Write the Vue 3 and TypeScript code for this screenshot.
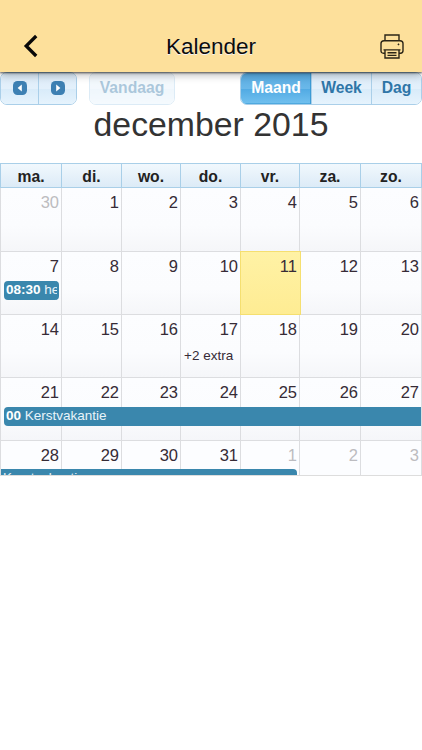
<script setup lang="ts">
interface Day {
  n: number
  other?: boolean
  today?: boolean
  extra?: string
}
interface CalendarEvent {
  time?: string
  title: string
  kind: string
}
interface Week {
  days: Day[]
  event?: CalendarEvent
}

const dayNames: string[] = ['ma.', 'di.', 'wo.', 'do.', 'vr.', 'za.', 'zo.']

const range = (from: number): Day[] => Array.from({ length: 7 }, (_, i) => ({ n: from + i }))

const weeks: Week[] = [
  { days: [{ n: 30, other: true }, ...range(1).slice(0, 6)] },
  {
    days: range(7).map((d) => ({ ...d, today: d.n === 11 })),
    event: { time: '08:30', title: 'he', kind: 'single' },
  },
  { days: range(14).map((d) => (d.n === 17 ? { ...d, extra: '+2 extra' } : d)) },
  { days: range(21), event: { time: '00', title: 'Kerstvakantie', kind: 'start' } },
  {
    days: [...range(28).slice(0, 4), { n: 1, other: true }, { n: 2, other: true }, { n: 3, other: true }],
    event: { title: 'Kerstvakantie', kind: 'end' },
  },
]
</script>

<template>
  <div class="screen">
    <header class="topbar">
      <svg class="back" width="16" height="24" viewBox="0 0 16 24">
        <path d="M13.2 2 3.2 12l10 10" fill="none" stroke="#080808" stroke-width="3.3" />
      </svg>
      <h1>Kalender</h1>
      <svg class="print" width="24" height="25" viewBox="0 0 24 26" preserveAspectRatio="none" fill="none" stroke="#2b2517" stroke-width="1.4">
        <path d="M5 7V1h14v6M5 20H3.500Q1 20 1 17.500V10Q1 7 4 7h16q3 0 3 3v7.500Q23 20 20.500 20H19" />
        <path d="M3.500 16.500h17M5 16.500V25h14v-8.500M7.500 19.500h9M7.500 22.300h9" />
        <circle cx="18.500" cy="10.800" r=".6" fill="#2b2517" stroke-width=".7" />
      </svg>
    </header>

    <div class="toolbar">
      <div class="group nav">
        <button class="btn" aria-label="Vorige">
          <svg width="14" height="14" viewBox="0 0 14 14">
            <rect width="14" height="14" rx="4.500" fill="#3d80b3" />
            <path d="M8.800 3.500v7L4.600 7z" fill="#fff" />
          </svg>
        </button>
        <button class="btn" aria-label="Volgende">
          <svg width="14" height="14" viewBox="0 0 14 14">
            <rect width="14" height="14" rx="4.500" fill="#3d80b3" />
            <path d="M5.200 3.500v7L9.400 7z" fill="#fff" />
          </svg>
        </button>
      </div>
      <div class="group now"><button class="btn">Vandaag</button></div>
      <div class="group views">
        <button class="btn active">Maand</button>
        <button class="btn week-btn">Week</button>
        <button class="btn day-btn">Dag</button>
      </div>
    </div>

    <h2>december 2015</h2>

    <div class="calendar">
      <div class="row names">
        <div v-for="name in dayNames" :key="name" class="name">{{ name }}</div>
      </div>
      <div v-for="(week, w) in weeks" :key="w" class="row week">
        <div
          v-for="(day, d) in week.days"
          :key="d"
          class="cell"
          :class="{ other: day.other, today: day.today }"
        >
          <span class="num">{{ day.n }}</span>
          <span v-if="day.extra" class="extra">{{ day.extra }}</span>
        </div>
        <div v-if="week.event" class="event" :class="week.event.kind">
          <b v-if="week.event.time">{{ week.event.time }}</b> {{ week.event.title }}
        </div>
      </div>
    </div>
  </div>
</template>

<style>
body {
  background: #fff;
}
</style>

<style scoped>
.screen {
  width: 422px;
  height: 750px;
  overflow: hidden;
  background: #fff;
  font-family: "Liberation Sans", Arial, sans-serif;
  color: #333;
}
.topbar {
  position: relative;
  z-index: 2;
  box-sizing: border-box;
  display: flex;
  justify-content: space-between;
  height: 72px;
  padding: 34px 18px 0 23px;
  background: #fde09b;
  box-shadow: 0 1px 2px rgba(0, 0, 0, 0.6), 0 2px 9px rgba(0, 0, 0, 0.32);
}
.topbar h1 {
  margin: 0;
  padding-left: 3px;
  font-size: 22.5px;
  line-height: 26px;
  font-weight: 400;
  color: #0c0c0c;
  text-shadow: 0 1px 0 #f3f3f3;
}
.toolbar {
  display: flex;
  height: 33px;
}
.group {
  box-sizing: border-box;
  display: flex;
  height: 33px;
  border: 1px solid #aacfe9;
  border-radius: 7px;
  overflow: hidden;
}
.btn {
  box-sizing: border-box;
  display: flex;
  align-items: center;
  justify-content: center;
  flex: 1;
  margin: 0;
  padding: 0 0 1px;
  border: 0;
  background: linear-gradient(#dcebf8 0%, #e3f0fb 50%, #d8ebf9 51%, #e6f3fd 100%);
  font: bold 15.7px "Liberation Sans", Arial, sans-serif;
  color: #2f76a8;
}
.btn + .btn {
  border-left: 1px solid #aacfe9;
}
.nav {
  width: 77px;
}
.now {
  width: 86px;
  margin-left: 12px;
  opacity: 0.4;
}
.views {
  width: 182px;
  margin-left: auto;
}
.views .btn {
  flex: none;
  width: 60px;
}
.views .active {
  width: 70px;
  background: linear-gradient(#58abe1 0%, #6ab8e9 50%, #51aae3 51%, #72c1ef 100%);
  color: #fff;
  box-shadow: inset -1px 0 0 #3c9bd5, inset 0 -1px 0 #4fa9df;
}
.views .day-btn {
  width: 50px;
}
h2 {
  margin: 0;
  height: 58px;
  font-size: 33.8px;
  line-height: 39px;
  font-weight: 400;
  text-align: center;
}
.calendar {
  height: 313px;
  overflow: hidden;
  box-sizing: border-box;
  border-bottom: 1px solid #ddd;
}
.row {
  display: grid;
  grid-template-columns: 61px 60px 59px 60px 59px 61px 62px;
}
.name {
  box-sizing: border-box;
  height: 25px;
  border: solid #a9cfe8;
  border-width: 1px 0 1px 1px;
  background: linear-gradient(#f1f8fd, #dcebf7);
  font-size: 15.7px;
  font-weight: 700;
  line-height: 25px;
  text-align: center;
  color: #222;
}
.name:last-child {
  border-right-width: 1px;
}
.week {
  position: relative;
  height: 63px;
}
.names + .week,
.names + .week .cell {
  height: 64px;
}
.cell {
  box-sizing: border-box;
  height: 63px;
  border: solid #dcdde0;
  border-width: 0 0 1px 1px;
  background: linear-gradient(#fcfdff 0%, #fbfcfe 60%, #f5f6f9 100%);
  color: #362b36;
}
.cell:nth-child(7) {
  border-right-width: 1px;
}
.week:last-child .cell {
  background: #fcfdff;
}
.num {
  display: block;
  padding: 4px 2px 0 0;
  font-size: 16.5px;
  line-height: 20px;
  text-align: right;
}
.other .num {
  color: #bcbcc0;
}
.today {
  position: relative;
  width: 61px;
  height: 64px;
  margin-top: -1px;
  border: 1px solid #f5df70;
  background: linear-gradient(#fff2a5, #feec93);
}
.today .num {
  padding-right: 3px;
}
.extra {
  display: block;
  padding: 9px 0 0 3px;
  font-size: 13.5px;
  line-height: 16px;
  white-space: nowrap;
}
.event {
  position: absolute;
  top: 29px;
  left: 4px;
  box-sizing: border-box;
  height: 19px;
  padding-left: 2px;
  overflow: hidden;
  background: #3a87ad;
  font-size: 13.5px;
  line-height: 18px;
  white-space: nowrap;
  color: #e8f4fa;
}
.event b {
  color: #fff;
}
.single {
  width: 55px;
  border-radius: 4px;
  border-right: 2px solid #3a87ad;
}
.start {
  right: 1px;
  border-radius: 4px 0 0 4px;
}
.end {
  top: 28px;
  left: 1px;
  width: 296px;
  line-height: 17px;
  border-radius: 0 4px 4px 0;
}
</style>
